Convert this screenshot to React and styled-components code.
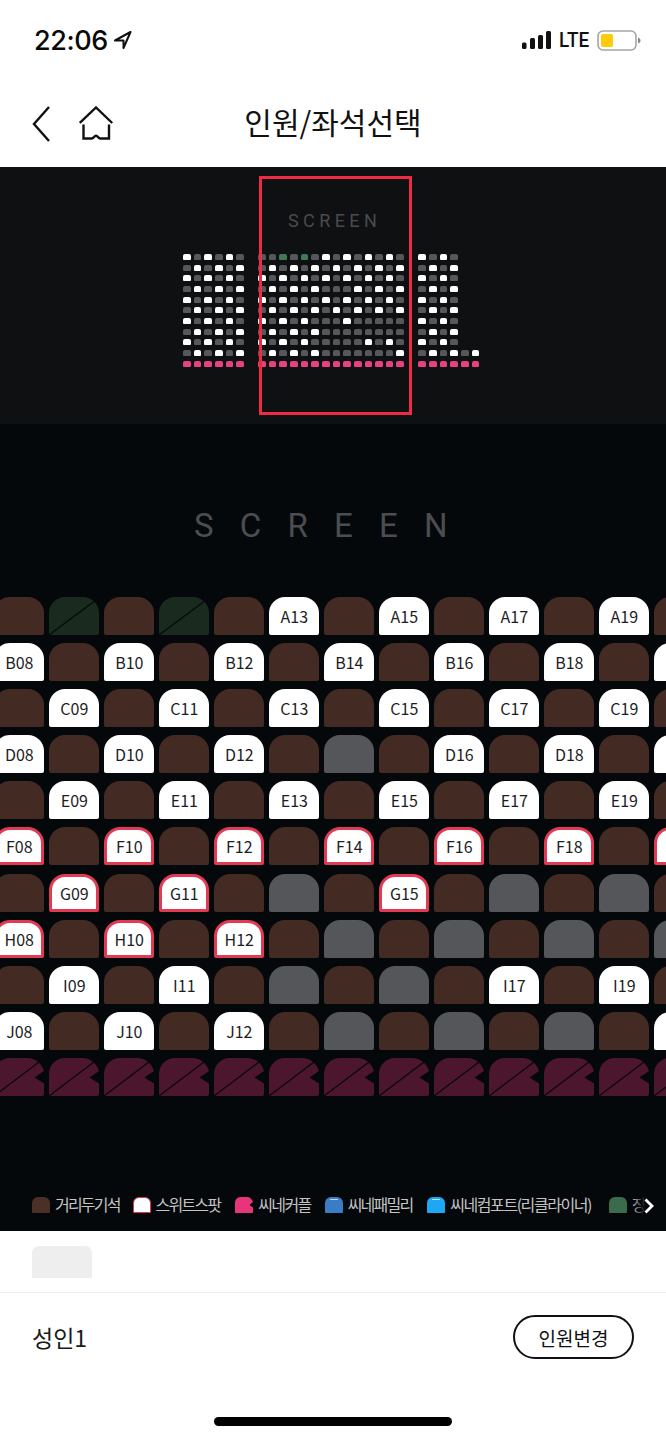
import React from 'react';
import styled, { createGlobalStyle } from 'styled-components';

const GlobalStyle = createGlobalStyle`
  html, body { margin: 0; padding: 0; background: #fff; }
  body { font-family: "Noto Sans CJK KR", "Noto Sans", sans-serif; }
`;

const Page = styled.div`
  width: 666px;
  height: 1441px;
  overflow: hidden;
  display: flex;
  flex-direction: column;
`;

const StatusBar = styled.div`
  height: 80px;
  flex: none;
  display: flex;
  align-items: center;
  justify-content: space-between;
  padding: 0 24px 0 34px;
  box-sizing: border-box;
`;
const Clock = styled.div`
  display: flex;
  align-items: center;
  gap: 6px;
  font-family: Inter, "Liberation Sans", sans-serif;
  font-weight: 500;
  font-size: 27px;
  letter-spacing: -0.4px;
  color: #0a0a0a;
`;
const StatusRight = styled.div`
  display: flex;
  align-items: center;
  gap: 7px;
`;
const Lte = styled.span`
  font-family: Roboto, "Liberation Sans", sans-serif;
  font-weight: 500;
  font-size: 21px;
  color: #111;
  transform: scaleX(0.9);
  transform-origin: left center;
  width: 31px;
`;

const Header = styled.header`
  height: 87px;
  flex: none;
  position: relative;
  display: flex;
  align-items: center;
  padding: 0 0 0 32px;
  gap: 29px;
  box-sizing: border-box;
`;
const Title = styled.h1`
  position: absolute;
  left: 0;
  right: 0;
  top: 19px;
  margin: 0;
  text-align: center;
  font-size: 30px;
  line-height: 44px;
  font-weight: 400;
  color: #111;
`;

const MiniPanel = styled.section`
  height: 257px;
  flex: none;
  background: #0f1012;
  position: relative;
  display: flex;
  flex-direction: column;
  align-items: flex-start;
  padding: 87px 0 0 183px;
  box-sizing: border-box;
`;
const MiniScreen = styled.div`
  position: absolute;
  top: 44px;
  left: 288px;
  font-family: Roboto, sans-serif;
  font-size: 18px;
  line-height: 20px;
  letter-spacing: 4.4px;
  color: #4a4b4e;
`;
const Viewport = styled.div`
  position: absolute;
  left: 259px;
  top: 9px;
  width: 153px;
  height: 239px;
  box-sizing: border-box;
  border: 3.5px solid #ee2a45;
`;
const MiniMap = styled.div`
  display: flex;
  flex-direction: column;
  gap: 4.67px;
`;
const MiniRow = styled.div`
  display: flex;
  gap: 14.3px;
`;
const MiniBlock = styled.div`
  display: flex;
  gap: 3.05px;
  width: ${(p) => p.$width}px;
  flex: none;
`;
const miniColors = { W: '#ffffff', g: '#55575a', G: '#3f7a56', P: '#e8417f' };
const MiniSeat = styled.i`
  display: block;
  width: 7.6px;
  height: 6px;
  flex: none;
  border-radius: 2px 2px 1px 1px;
  background: ${(p) => miniColors[p.$c]};
`;

const Main = styled.main`
  height: 807px;
  flex: none;
  background: #05080a;
  overflow: hidden;
  display: flex;
  flex-direction: column;
  position: relative;
`;
const BigScreen = styled.div`
  height: 173px;
  flex: none;
  box-sizing: border-box;
  padding: 79px 0 0 194px;
  font-family: Roboto, sans-serif;
  font-size: 33px;
  line-height: 46px;
  letter-spacing: 26.2px;
  color: #4b4d50;
  white-space: nowrap;
`;
const SeatGrid = styled.div`
  display: flex;
  flex-direction: column;
  gap: 8.1px;
  margin-left: -5.7px;
`;
const SeatRow = styled.div`
  display: flex;
  gap: 5px;
  width: 800px;
`;
const seatBg = {
  brown: '#432b23',
  green: '#1a2a1f',
  grey: '#54565a',
  white: '#ffffff',
  suite: '#ffffff',
};
const Seat = styled.div`
  position: relative;
  flex: none;
  width: 50px;
  height: 38px;
  box-sizing: border-box;
  border-radius: 16px 16px 2px 2px;
  background: ${(p) => seatBg[p.$kind]};
  border: ${(p) => (p.$kind === 'suite' ? '3px solid #e23a55' : 'none')};
  display: flex;
  align-items: center;
  justify-content: center;
  font-size: 16px;
  line-height: 20px;
  color: #1d1d1f;
  overflow: hidden;
`;
const Strike = styled.svg`
  position: absolute;
  left: 0;
  top: 0;
`;
const CoupleSeat = styled.svg`
  flex: none;
  display: block;
`;

const LegendBar = styled.div`
  position: absolute;
  left: 0;
  right: 0;
  bottom: 0;
  height: 54px;
  display: flex;
  align-items: flex-start;
  padding: 19px 0 0 32px;
  box-sizing: border-box;
  overflow: hidden;
`;
const LegendItem = styled.div`
  display: flex;
  align-items: center;
  gap: 5px;
  margin-right: ${(p) => p.$gap}px;
  flex: none;
  font-size: 16px;
  line-height: 17px;
  letter-spacing: ${(p) => p.$spacing}px;
  color: #c4c4c4;
`;
const Swatch = styled.span`
  display: block;
  position: relative;
  width: 18px;
  height: 16px;
  flex: none;
  box-sizing: border-box;
  border-radius: 6px 6px 1px 1px;
  background: ${(p) => p.$bg};
  border: ${(p) => (p.$border ? `1.5px solid ${p.$border}` : 'none')};
`;
const SwatchLine = styled.span`
  position: absolute;
  left: 5px;
  right: 5px;
  top: 2px;
  height: 1px;
  background: rgba(255, 255, 255, 0.7);
`;
const MoreBox = styled.div`
  position: absolute;
  right: 0;
  top: 0;
  bottom: 0;
  width: 34px;
  box-sizing: border-box;
  padding: 18px 0 0 12px;
  background: linear-gradient(to right, rgba(5, 8, 10, 0), #05080a 40%);
`;

const TabRow = styled.div`
  height: 62px;
  flex: none;
  box-sizing: border-box;
  padding: 15px 0 0 32px;
  border-bottom: 1.5px solid #eeeeee;
`;
const Tab = styled.div`
  width: 60px;
  height: 32px;
  background: #eeeeee;
  border-radius: 7px 7px 0 0;
`;
const Footer = styled.div`
  height: 88px;
  flex: none;
  display: flex;
  align-items: center;
  justify-content: space-between;
  padding: 0 32px;
  box-sizing: border-box;
`;
const People = styled.div`
  font-size: 23px;
  color: #1a1a1a;
`;
const ChangeButton = styled.button`
  width: 121px;
  height: 44px;
  box-sizing: border-box;
  border: 2px solid #111;
  border-radius: 22px;
  background: #fff;
  font-family: inherit;
  font-size: 19px;
  color: #111;
  padding: 0;
`;
const HomeBar = styled.div`
  flex: 1;
  display: flex;
  justify-content: center;
  padding-top: 36px;
`;
const HomePill = styled.div`
  width: 238px;
  height: 9px;
  border-radius: 5px;
  background: #000;
`;

// rows of the minimap: W free, g taken, G green, P couple
const miniRows = [
  ['WgWgWg', 'ggGgGgWgWgWgWg', 'WgWg'],
  ['gWgWgW', 'gWgWgWgWgWgWgW', 'gWgW'],
  ['WgWgWg', 'WgWgWgWgWgWgWg', 'WgWg'],
  ['gWgWgW', 'gWgWgWgggWgWgW', 'gWgW'],
  ['WgWgWg', 'WgWgWgWgWgWgWg', 'WgWg'],
  ['gWgWgW', 'gWgWgWgWgWgWgW', 'gWgW'],
  ['WgWgWg', 'WgWgWgggWggggg', 'WgWg'],
  ['gWgWgW', 'gWgWgWgggggggg', 'gWgW'],
  ['WgWgWg', 'WgWgWgggggWgWg', 'WgWg'],
  ['gWgWgW', 'gWgWgWgggggggW', 'gWgWgW'],
  ['PPPPPP', 'PPPPPPPPPPPPPP', 'PPPPPP'],
];

const blockWidths = [60.85, 146, 60.85];

const b = { kind: 'brown' };
const g = { kind: 'grey' };
const n = { kind: 'green' };
const w = (label) => ({ kind: 'white', label });
const s = (label) => ({ kind: 'suite', label });

const seatRows = [
  [b, n, b, n, b, w('A13'), b, w('A15'), b, w('A17'), b, w('A19'), b],
  [w('B08'), b, w('B10'), b, w('B12'), b, w('B14'), b, w('B16'), b, w('B18'), b, w('')],
  [b, w('C09'), b, w('C11'), b, w('C13'), b, w('C15'), b, w('C17'), b, w('C19'), b],
  [w('D08'), b, w('D10'), b, w('D12'), b, g, b, w('D16'), b, w('D18'), b, w('')],
  [b, w('E09'), b, w('E11'), b, w('E13'), b, w('E15'), b, w('E17'), b, w('E19'), b],
  [s('F08'), b, s('F10'), b, s('F12'), b, s('F14'), b, s('F16'), b, s('F18'), b, s('')],
  [b, s('G09'), b, s('G11'), b, g, b, s('G15'), b, g, b, g, b],
  [s('H08'), b, s('H10'), b, s('H12'), b, g, b, g, b, g, b, g],
  [b, w('I09'), b, w('I11'), b, g, b, g, b, w('I17'), b, w('I19'), b],
  [w('J08'), b, w('J10'), b, w('J12'), b, g, b, g, b, g, b, w('')],
];

const legend = [
  { label: '거리두기석', bg: '#4a3026', gap: 13, spacing: -1.8 },
  { label: '스위트스팟', bg: '#ffffff', border: '#d8304f', gap: 15, spacing: -1.8 },
  { label: '씨네커플', couple: true, gap: 14, spacing: -1.6 },
  { label: '씨네패밀리', bg: '#3a7cc6', line: true, gap: 15, spacing: -1.8 },
  { label: '씨네컴포트(리클라이너)', bg: '#1ea7f5', line: true, gap: 18, spacing: -1.45 },
  { label: '장애인석', bg: '#3a6b4c', gap: 0, spacing: -1.8 },
];

function CoupleShape() {
  return (
    <CoupleSeat width="50" height="38" viewBox="0 0 50 38">
      <path
        d="M16 0H33C42 0 48 6 50 13L40.5 19.5L50 25.5V36Q50 38 48 38H2Q0 38 0 36V16C0 7 7 0 16 0Z"
        fill="#4c162e"
      />
      <path d="M0 38L45 4" stroke="#05080a" strokeWidth="1.2" />
    </CoupleSeat>
  );
}

function App() {
  return (
    <Page>
      <GlobalStyle />
      <StatusBar>
        <Clock>
          22:06
          <svg width="18" height="18" viewBox="0 0 18 18">
            <path d="M16.5 1L1 9.5H9.5V17Z" fill="none" stroke="#111" strokeWidth="2" strokeLinejoin="round" />
          </svg>
        </Clock>
        <StatusRight>
          <svg width="30" height="18" viewBox="0 0 30 18">
            <rect x="0" y="11.5" width="4.5" height="6.5" rx="1.5" fill="#111" />
            <rect x="8" y="7" width="5" height="11" rx="1.5" fill="#111" />
            <rect x="16" y="4" width="5" height="14" rx="1.5" fill="#111" />
            <rect x="24" y="0" width="5" height="18" rx="1.5" fill="#111" />
          </svg>
          <Lte>LTE</Lte>
          <svg width="45" height="21" viewBox="0 0 45 21">
            <rect x="1" y="1" width="38" height="19" rx="5" fill="#fff" stroke="#a5a5a5" strokeWidth="1.6" />
            <rect x="4" y="4" width="12" height="13" rx="2" fill="#ffcb0a" />
            <path d="M41 7.5C42.5 8 43.5 9 43.5 10.5C43.5 12 42.5 13 41 13.5Z" fill="#888" />
          </svg>
        </StatusRight>
      </StatusBar>
      <Header>
        <svg width="18" height="36" viewBox="0 0 18 36">
          <path d="M17 1L2 18L17 35" fill="none" stroke="#111" strokeWidth="2.4" />
        </svg>
        <svg width="35" height="36" viewBox="0 0 35 36">
          <path
            d="M0.8 17L17 1.5L33.2 17M4.5 18.5V32.5H12.5Q14 32.5 15 31Q17 28.5 19 31Q20 32.5 21.5 32.5H30V18.5"
            fill="none"
            stroke="#111"
            strokeWidth="2.4"
          />
        </svg>
        <Title>인원/좌석선택</Title>
      </Header>
      <MiniPanel>
        <MiniScreen>SCREEN</MiniScreen>
        <MiniMap>
          {miniRows.map((row, i) => (
            <MiniRow key={i}>
              {row.map((block, j) => (
                <MiniBlock key={j} $width={blockWidths[j]}>
                  {block.split('').map((c, k) => (
                    <MiniSeat key={k} $c={c} />
                  ))}
                </MiniBlock>
              ))}
            </MiniRow>
          ))}
        </MiniMap>
        <Viewport />
      </MiniPanel>
      <Main>
        <BigScreen>SCREEN</BigScreen>
        <SeatGrid>
          {seatRows.map((row, i) => (
            <SeatRow key={i}>
              {row.map((seat, j) => (
                <Seat key={j} $kind={seat.kind}>
                  {seat.label}
                  {seat.kind === 'green' && (
                    <Strike width="50" height="38" viewBox="0 0 50 38">
                      <path d="M0 38L47 3" stroke="#05080a" strokeWidth="1.2" />
                    </Strike>
                  )}
                </Seat>
              ))}
            </SeatRow>
          ))}
          <SeatRow>
            {Array.from({ length: 13 }).map((_, i) => (
              <CoupleShape key={i} />
            ))}
          </SeatRow>
        </SeatGrid>
        <LegendBar>
          {legend.map((item) => (
            <LegendItem key={item.label} $gap={item.gap} $spacing={item.spacing}>
              {item.couple ? (
                <svg width="18" height="16" viewBox="0 0 18 16">
                  <path d="M6 0H12C15 0 17 2 18 5L14.5 8L18 10.5V16H0V6C0 2 3 0 6 0Z" fill="#e8347a" />
                </svg>
              ) : (
                <Swatch $bg={item.bg} $border={item.border}>
                  {item.line && <SwatchLine />}
                </Swatch>
              )}
              {item.label}
            </LegendItem>
          ))}
          <MoreBox>
            <svg width="10" height="16" viewBox="0 0 10 16">
              <path d="M1.5 1.5L8 8L1.5 14.5" fill="none" stroke="#fff" strokeWidth="2.8" />
            </svg>
          </MoreBox>
        </LegendBar>
      </Main>
      <TabRow>
        <Tab />
      </TabRow>
      <Footer>
        <People>성인1</People>
        <ChangeButton>인원변경</ChangeButton>
      </Footer>
      <HomeBar>
        <HomePill />
      </HomeBar>
    </Page>
  );
}

export default App;
